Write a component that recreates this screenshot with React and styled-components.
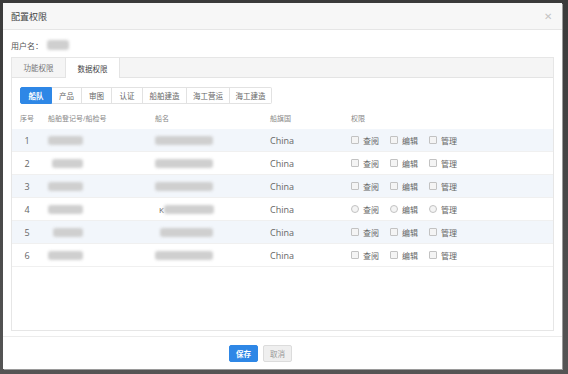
import React from "react";
import styled, { createGlobalStyle } from "styled-components";

const Global = createGlobalStyle`
  html, body { margin: 0; padding: 0; }
  body {
    background: #4b4b4b;
    font-family: "Open Sans", "Noto Sans CJK SC", sans-serif;
    color: #666;
  }
`;

const Stage = styled.div`
  width: 568px;
  height: 374px;
  padding: 3px 6px 5px 3px;
  box-sizing: border-box;
  background: linear-gradient(#3a3a3a, #555);
`;

const Modal = styled.div`
  width: 559px;
  height: 366px;
  background: #fff;
  display: flex;
  flex-direction: column;
  box-shadow: 1px 1px 0 #9a9a9a;
`;

const Header = styled.div`
  height: 27px;
  flex: none;
  display: flex;
  align-items: center;
  justify-content: space-between;
  padding: 0 10px 0 8px;
  background: #f7f7f7;
  border-bottom: 1px solid #e6e6e6;
  box-sizing: border-box;
`;

const Title = styled.span`
  font-size: 9px;
  color: #444;
`;

const Close = styled.span`
  font-size: 10px;
  color: #c4c4c4;
  line-height: 1;
`;

const Body = styled.div`
  flex: 1;
  display: flex;
  flex-direction: column;
  padding: 9px 8px 5px 8px;
  min-height: 0;
`;

const UserRow = styled.div`
  height: 12px;
  display: flex;
  align-items: center;
  gap: 2px;
  font-size: 8px;
  color: #555;
  margin-bottom: 6px;
`;

const Blur = styled.span`
  display: inline-block;
  width: ${(p) => p.w}px;
  height: ${(p) => p.h || 9}px;
  margin-left: ${(p) => p.ml || 0}px;
  background: #cfcfcf;
  border-radius: 3px;
  filter: blur(1.6px);
`;

const Panel = styled.div`
  flex: 1;
  border: 1px solid #e6e6e6;
  display: flex;
  flex-direction: column;
`;

const TabBar = styled.div`
  height: 20px;
  flex: none;
  display: flex;
  background: #f5f5f5;
  border-bottom: 1px solid #e4e4e4;
  box-sizing: border-box;
`;

const Tab = styled.div`
  width: ${(p) => (p.active ? 55 : 53)}px;
  display: flex;
  align-items: center;
  justify-content: center;
  font-size: 7.5px;
  color: ${(p) => (p.active ? "#444" : "#777")};
  background: ${(p) => (p.active ? "#fff" : "transparent")};
  border-left: 1px solid ${(p) => (p.active ? "#e4e4e4" : "transparent")};
  border-right: 1px solid ${(p) => (p.active ? "#e4e4e4" : "transparent")};
  height: ${(p) => (p.active ? 20 : 19)}px;
  box-sizing: border-box;
`;

const Segments = styled.div`
  display: flex;
  margin: 9px 0 0 8px;
`;

const Seg = styled.div`
  width: ${(p) => p.w}px;
  height: 17px;
  display: flex;
  align-items: center;
  justify-content: center;
  font-size: 7.5px;
  color: ${(p) => (p.active ? "#fff" : "#666")};
  background: ${(p) => (p.active ? "#2e87e6" : "#fff")};
  border: 1px solid ${(p) => (p.active ? "#2e87e6" : "#e2e2e2")};
  border-left-width: ${(p) => (p.first ? 1 : 0)}px;
  border-radius: ${(p) => (p.first ? "2px 0 0 2px" : p.last ? "0 2px 2px 0" : "0")};
  box-sizing: border-box;
  font-weight: ${(p) => (p.active ? 600 : 400)};
`;

const Table = styled.div`
  margin-top: 4px;
`;

const Row = styled.div`
  display: grid;
  grid-template-columns: 30px 107px 115px 81px 1fr;
  height: ${(p) => (p.head ? 21 : 23)}px;
  align-items: center;
  background: ${(p) => (p.striped ? "#f2f6fb" : "#fff")};
  border-bottom: 1px solid ${(p) => (p.head ? "transparent" : "#f0f0f0")};
  box-sizing: border-box;
  font-size: ${(p) => (p.head ? 7 : 9)}px;
  color: ${(p) => (p.head ? "#888" : "#666")};
`;

const Cell = styled.div`
  padding-left: ${(p) => (p.center ? 0 : 6)}px;
  display: flex;
  align-items: center;
  justify-content: ${(p) => (p.center ? "center" : "flex-start")};
`;

const Letter = styled.span`
  margin-left: 4px;
  font-size: 8px;
`;

const Perms = styled.div`
  display: flex;
  align-items: center;
  padding-left: 6px;
`;

const Check = styled.label`
  display: flex;
  align-items: center;
  gap: 4px;
  width: 39px;
  font-size: 8px;
  color: #666;
`;

const Box = styled.span`
  width: 6px;
  height: 6px;
  border: 1px solid #c2c2c2;
  background: #f4f4f4;
  border-radius: ${(p) => (p.round ? "50%" : "1px")};
`;

const Footer = styled.div`
  height: 33px;
  flex: none;
  border-top: 1px solid #ececec;
  display: flex;
  align-items: center;
  justify-content: center;
  gap: 5px;
  padding-right: 44px;
  box-sizing: border-box;
`;

const Button = styled.button`
  width: 29px;
  height: 17px;
  padding: 0;
  font-family: inherit;
  font-size: 7.5px;
  border-radius: 2px;
  border: 1px solid ${(p) => (p.primary ? "#2e87e6" : "#dcdcdc")};
  background: ${(p) => (p.primary ? "#2e87e6" : "#efefef")};
  color: ${(p) => (p.primary ? "#fff" : "#999")};
  font-weight: ${(p) => (p.primary ? 700 : 400)};
`;

const segments = [
  { label: "船队", w: 32 },
  { label: "产品", w: 30 },
  { label: "审图", w: 30 },
  { label: "认证", w: 31 },
  { label: "船舶建造", w: 44 },
  { label: "海工营运", w: 43 },
  { label: "海工建造", w: 42 },
];

const rows = [
  { n: 1, a: [35, 0], b: [58, 0] },
  { n: 2, a: [31, 4], b: [58, 0] },
  { n: 3, a: [35, 0], b: [58, 0] },
  { n: 4, a: [35, 0], b: [50, 8], k: true, round: true },
  { n: 5, a: [30, 5], b: [53, 5] },
  { n: 6, a: [35, 0], b: [58, 0] },
];

const App = () => {
  return (
    <>
      <Global />
      <Stage>
        <Modal>
          <Header>
            <Title>配置权限</Title>
            <Close>✕</Close>
          </Header>
          <Body>
            <UserRow>
              用户名：<Blur w={22} h={10} ml={2} />
            </UserRow>
            <Panel>
              <TabBar>
                <Tab>功能权限</Tab>
                <Tab active>数据权限</Tab>
              </TabBar>
              <Segments>
                {segments.map((s, i) => (
                  <Seg
                    key={s.label}
                    w={s.w}
                    active={i === 0}
                    first={i === 0}
                    last={i === segments.length - 1}
                  >
                    {s.label}
                  </Seg>
                ))}
              </Segments>
              <Table>
                <Row head>
                  <Cell center>序号</Cell>
                  <Cell>船舶登记号/船检号</Cell>
                  <Cell>船名</Cell>
                  <Cell>船旗国</Cell>
                  <Cell>权限</Cell>
                </Row>
                {rows.map((r, i) => (
                  <Row key={r.n} striped={i % 2 === 0}>
                    <Cell center>{r.n}</Cell>
                    <Cell>
                      <Blur w={r.a[0]} ml={r.a[1]} />
                    </Cell>
                    <Cell>
                      {r.k && <Letter>K</Letter>}
                      <Blur w={r.b[0]} ml={r.k ? 0 : r.b[1]} />
                    </Cell>
                    <Cell>China</Cell>
                    <Perms>
                      {["查阅", "编辑", "管理"].map((p) => (
                        <Check key={p}>
                          <Box round={r.round} />
                          {p}
                        </Check>
                      ))}
                    </Perms>
                  </Row>
                ))}
              </Table>
            </Panel>
          </Body>
          <Footer>
            <Button primary>保存</Button>
            <Button>取消</Button>
          </Footer>
        </Modal>
      </Stage>
    </>
  );
};

export default App;
